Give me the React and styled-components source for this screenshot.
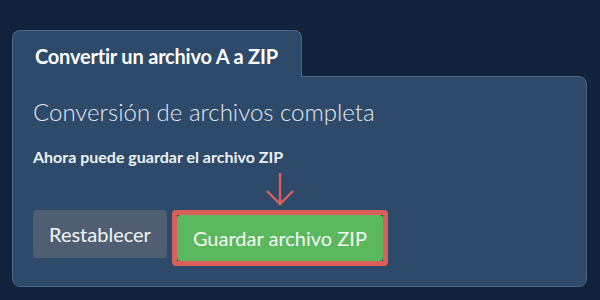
import React from 'react'
import styled, { createGlobalStyle } from 'styled-components'

const GlobalStyle = createGlobalStyle`
  html, body {
    margin: 0;
    padding: 0;
    background-color: #11223a;
    font-family: Lato, 'Open Sans', sans-serif;
  }
`

const Page = styled.div`
  width: 600px;
  height: 300px;
  box-sizing: border-box;
  padding: 30px 13px 0 12px;
  background-color: #11223a;
`

const Tab = styled.div`
  position: relative;
  z-index: 2;
  display: inline-block;
  box-sizing: border-box;
  width: 290px;
  height: 47px;
  margin-bottom: -1px;
  padding: 13px 0 0 22px;
  background-color: #2d4a6a;
  border: 1px solid #4b6686;
  border-bottom: none;
  border-radius: 8px 8px 0 0;
  color: #ffffff;
  font-size: 20px;
  line-height: 24px;
  font-weight: 700;
  letter-spacing: -0.2px;
`

const Panel = styled.div`
  position: relative;
  box-sizing: border-box;
  height: 211px;
  padding: 20px 20px 0 20px;
  background-color: #2d4a6a;
  border: 1px solid #4b6686;
  border-radius: 0 8px 8px 8px;
`

const Heading = styled.h2`
  margin: 0;
  color: #e3e9f0;
  font-size: 24px;
  font-weight: 300;
  line-height: 30px;
`

const Note = styled.p`
  margin: 20px 0 0 0;
  color: #ecf0f4;
  font-size: 16px;
  line-height: 20px;
  font-weight: 700;
`

const Actions = styled.div`
  display: flex;
  align-items: flex-start;
  gap: 5px;
  margin-top: 43px;
`

const Button = styled.button`
  box-sizing: border-box;
  height: ${props => props.tall ? '46px' : '48px'};
  padding: 0 16px;
  border: none;
  border-radius: 4px;
  background-color: ${props => props.bg};
  color: #f4f6f8;
  font-family: Lato, 'Open Sans', sans-serif;
  font-size: 20px;
  font-weight: 400;
  cursor: pointer;
`

const Highlight = styled.div`
  position: relative;
  border: 5px solid #d9605a;
  border-radius: 4px;
  display: flex;
`

const Arrow = styled.svg`
  position: absolute;
  left: 50%;
  top: -43px;
  transform: translateX(-50%);
`

const App = () => {
  return (
    <Page>
      <GlobalStyle />
      <Tab>Convertir un archivo A a ZIP</Tab>
      <Panel>
        <Heading>Conversión de archivos completa</Heading>
        <Note>Ahora puede guardar el archivo ZIP</Note>
        <Actions>
          <Button bg='#4f5f71'>Restablecer</Button>
          <Highlight>
            <Arrow width='30' height='36' viewBox='0 0 30 36'>
              <path d='M15 1 V32 M2 19 L15 32 L28 19' fill='none' stroke='#d9605a' strokeWidth='2.4' />
            </Arrow>
            <Button tall bg='#5cb85c'>Guardar archivo ZIP</Button>
          </Highlight>
        </Actions>
      </Panel>
    </Page>
  )
}

export default App
